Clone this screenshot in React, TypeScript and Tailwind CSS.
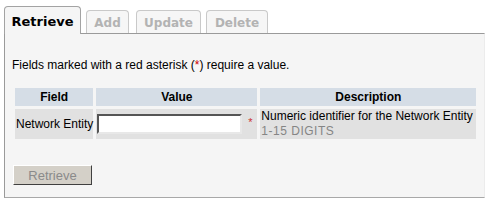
const tabs = [
  { label: 'Add', cls: 'ml-[5px] w-[43px]' },
  { label: 'Update', cls: 'ml-[7px] w-[65px]' },
  { label: 'Delete', cls: 'ml-[5px] w-[62px]' },
];

export default function App() {
  return (
    <div className="h-[203px] w-[492px] bg-white font-['Liberation_Sans',Arial,sans-serif] text-[12px] text-black">
      <div className="flex items-end pl-[4px] pt-[6px] font-['DejaVu_Sans',Verdana,sans-serif] font-bold">
        <div className="relative z-10 -mb-px flex h-[28px] w-[77px] items-center justify-center rounded-t-[4px] border border-b-0 border-[#a3a3a3] bg-[#f5f5f5] pt-[2px] text-[13px] text-black">
          Retrieve
        </div>
        {tabs.map((t) => (
          <div
            key={t.label}
            className={`flex h-[23px] items-center justify-center rounded-t-[4px] border border-b-0 border-[#c9c9c9] bg-[#f6f6f6] pt-[1px] text-[12px] text-[#b3b3b3] ${t.cls}`}
          >
            {t.label}
          </div>
        ))}
      </div>

      <div className="ml-[4px] h-[165px] w-[481px] border-t border-l border-b border-r border-t-[#9a9a9a] border-l-[#9a9a9a] border-b-[#a8a8a8] border-r-[#ececec] bg-[#f5f5f5] pl-[7px]">
        <p className="mt-[24px] leading-[14px]">
          Fields marked with a red asterisk (<span className="text-[#cc0000]">*</span>) require a value.
        </p>

        <table className="mt-[13px] border-separate border-spacing-[3px]">
          <thead>
            <tr className="h-[18px] bg-[#d5dde6] font-bold">
              <th className="w-[78px] p-0 text-center">Field</th>
              <th className="w-[161px] p-0 text-center">Value</th>
              <th className="w-[216px] p-0 text-center">Description</th>
            </tr>
          </thead>
          <tbody>
            <tr className="h-[30px] bg-[#e1e1e1]">
              <td className="p-0 pl-[1px] align-middle whitespace-nowrap">Network Entity</td>
              <td className="p-0 pl-[1px] align-middle">
                <div className="flex items-center">
                  <input
                    type="text"
                    className="h-[20px] w-[145px] border-2 border-t-[#555] border-l-[#555] border-r-[#e8e8e8] border-b-[#e8e8e8] bg-white outline-none"
                  />
                  <span className="ml-[6px] -mt-[3px] text-[11px] text-[#cc3333]">*</span>
                </div>
              </td>
              <td className="p-0 pl-[1px] align-middle leading-[15px]">
                <div>Numeric identifier for the Network Entity</div>
                <div className="tracking-[0.5px] text-[#858585]">1-15 DIGITS</div>
              </td>
            </tr>
          </tbody>
        </table>

        <button
          disabled
          className="mt-[23px] ml-[1px] h-[20px] w-[79px] border border-t-white border-l-white border-r-[#404040] border-b-[#404040] bg-[#d4d0c8] text-[13px] text-[#8a8a8a]"
        >
          Retrieve
        </button>
      </div>
    </div>
  );
}
